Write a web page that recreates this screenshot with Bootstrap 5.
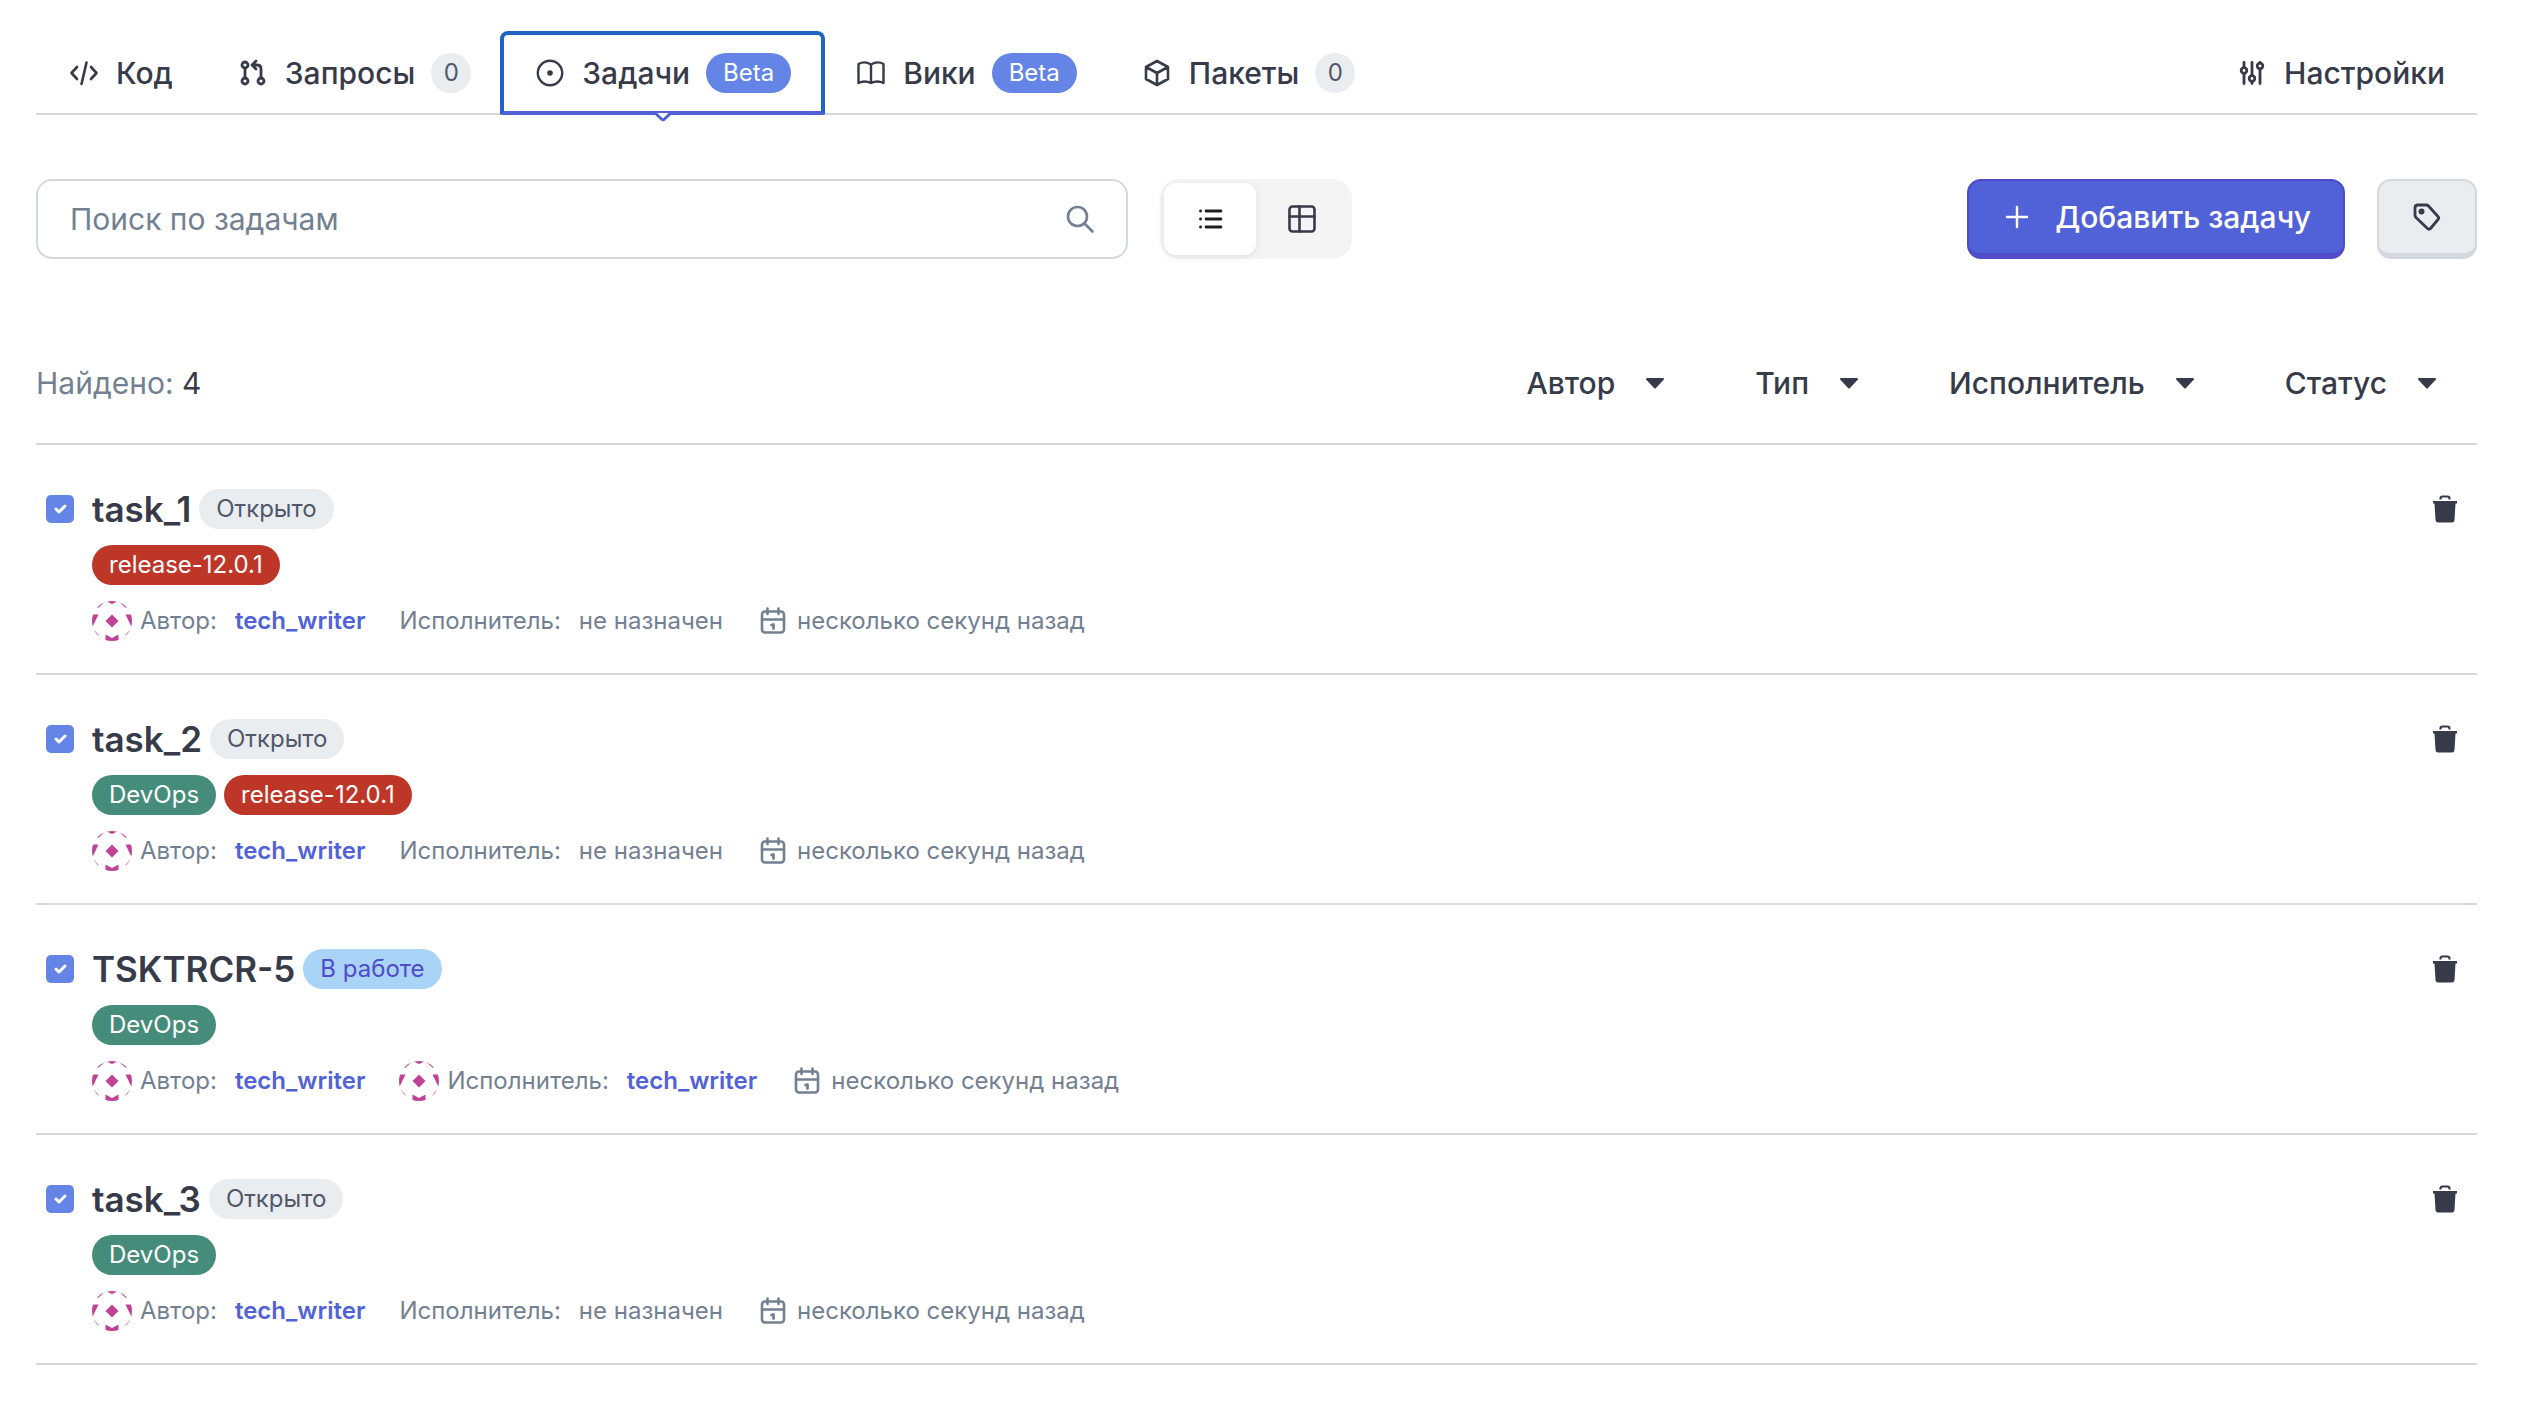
<!DOCTYPE html>
<html lang="ru">
<head>
<meta charset="utf-8">
<meta name="viewport" content="width=device-width, initial-scale=1">
<title>Задачи</title>
<link href="https://cdn.jsdelivr.net/npm/bootstrap@5.3.0/dist/css/bootstrap.min.css" rel="stylesheet">
<style>
:root{--ink:#373b49;--muted:#738092;--line:#d3d9df;--soft:#e9edf0;--sky:#6485e5;--brand:#5162d9;--brand-dark:#4f4bc9}
body{font-family:Inter,"Noto Sans",sans-serif;font-size:30px;line-height:40px;color:var(--ink);background:#fff}
.page{padding:31px 55px 0 36px}
svg{display:block;flex:none;fill:none;stroke:currentColor;stroke-linecap:round;stroke-linejoin:round}
.i32{width:32px;height:32px}
.tabs{border-bottom:2px solid var(--line)}
.tab-item{height:84px;margin-bottom:-2px;padding:0 32px;gap:16px;font-weight:500;color:var(--ink);text-decoration:none;display:flex;align-items:center;position:relative}
.tab-item.active{border:4px solid #2162c7;border-bottom-color:var(--brand);border-radius:8px 8px 2px 2px;padding:0 30px;margin-right:-2px;margin-left:-3px;background:#fff}
.tab-tip{position:absolute;left:50%;top:100%;margin-left:-10px;width:20px;height:12px}
.pill{height:40px;padding:0 17px;border-radius:20px;font-size:24px;line-height:40px;font-weight:400;white-space:nowrap}
.pill-round{min-width:40px;padding:0;text-align:center}
.pill-sky{background:var(--sky);color:#fff}
.pill-soft{background:var(--soft);color:#515869}
.pill-work{background:#a9d3f7;color:var(--brand-dark)}
.pill-red{background:#be3628;color:#fff}
.pill-green{background:#468c7b;color:#fff}
.tools{margin-top:64px;gap:32px}
.search{flex:0 1 1092px;height:80px;border:2px solid var(--line);border-radius:16px;padding:0 30px 0 32px}
.search input{border:0;padding:0;font-size:30px;line-height:40px;color:var(--ink);background:none;min-width:0}
.search input:focus{box-shadow:none}
.search input::placeholder{color:var(--muted);opacity:1}
.search button{color:var(--muted)}
.plain{border:0;background:none;padding:0;color:inherit}
.switch{height:80px;padding:4px;border-radius:20px;background:#f4f4f4}
.switch button{width:92px;border:0;border-radius:12px;background:none;color:var(--ink)}
.switch .on{background:#fff;color:#1e1e22;box-shadow:0 2px 8px rgba(0,0,0,.08)}
.act{height:80px;border-radius:14px;border:2px solid;border-bottom-width:6px;padding:0 32px;gap:22px;font-size:30px;line-height:40px}
.act-main,.act-main:hover{background:var(--brand);border-color:var(--brand-dark);color:#fff}
.act-soft,.act-soft:hover{background:var(--soft);border-color:var(--line);color:var(--ink)}
.found{margin-top:104px;padding-bottom:40px;border-bottom:2px solid var(--line)}
.found-label{color:var(--muted)}
.filter{gap:24px;padding:8px 34px 8px 16px;font-weight:500}
.filters{gap:34px;margin:-8px 0}
.task{padding:44px 16px 32px 10px;border-bottom:2px solid var(--line);gap:18px}
.task .form-check-input{width:28px;height:28px;margin:6px 0 0;border:0;border-radius:5px}
.task .form-check-input:checked{background-color:var(--sky);background-size:20px}
.title{font-size:35px;line-height:40px;font-weight:600;margin:0}
.title a{color:inherit;text-decoration:none}
.meta{font-size:24px;color:var(--muted);gap:34px}
.meta a{color:var(--brand);font-weight:600;text-decoration:none}
.person{gap:8px}
.value{margin-left:10px}
.ava{width:40px;height:40px;color:#bf4296}
</style>
</head>
<body>
<svg width="0" height="0" class="position-absolute" aria-hidden="true">
<defs>
<clipPath id="round"><circle cx="20" cy="20" r="20"/></clipPath>
<symbol id="avatar" viewBox="0 0 40 40"><g clip-path="url(#round)" fill="currentColor" stroke="none"><path d="M20 13.500L26.500 20 20 26.500 13.500 20ZM13.500 0H26.500L20 3ZM13.500 33.500L20 37L26.500 33.500V40H13.500ZM0 13.500H6.500L0 27ZM40 13.500H33.500L40 27Z"/><path d="M6 7L13.500 0.500L12 0L5 6ZM34 7L26.500 0.500L28 0L35 6ZM6.500 34L0 26.500V29L6 35ZM33.500 34L40 26.500V29L34 35Z"/></g></symbol>
<symbol id="calendar" viewBox="0 0 32 32"><rect x="5" y="6.500" width="22" height="21" rx="3" stroke-width="2.600"/><path d="M5 14.500H27M10.500 3.500V9M21.500 3.500V9" stroke-width="2.600"/><path d="M14.500 20L16.500 19.500V23.500" stroke-width="2.800"/></symbol>
<symbol id="trash" viewBox="0 0 32 32"><path d="M4 8H28V10.500H26.500L25.500 27Q25.300 29.500 23 29.500H9Q6.700 29.500 6.500 27L5.500 10.500H4Z" fill="currentColor" stroke="none"/><path d="M11.500 6.500V5.500Q11.500 3.500 13.500 3.500H18.500Q20.500 3.500 20.500 5.500V6.500" stroke-width="2.200" stroke-linecap="butt"/></symbol>
<symbol id="caret" viewBox="0 0 32 32"><path d="M8 12H24L16 20.500Z" fill="currentColor" stroke-width="2"/></symbol>
</defs>
</svg>
<main class="page">
<nav class="tabs d-flex" aria-label="Разделы проекта">
<a class="tab-item" href="#code"><svg class="i32" viewBox="0 0 32 32" stroke-width="2.600"><path d="M9 10L3.500 16L9 22M23 10L28.500 16L23 22M18.500 5.500L13.500 27"/></svg>Код</a>
<a class="tab-item" href="#requests"><svg class="i32" viewBox="0 0 32 32" stroke-width="2.800"><circle cx="8" cy="8" r="3"/><circle cx="8" cy="24" r="3"/><circle cx="24" cy="24" r="3"/><path d="M8 11V21M24 21V12Q24 8 20 8H15M19 4L15 8L19 12"/></svg>Запросы<span class="pill pill-soft pill-round">0</span></a>
<a class="tab-item active" href="#tasks" aria-current="page"><svg class="i32" viewBox="0 0 32 32" stroke-width="2.400"><circle cx="16" cy="16" r="12.200"/><circle cx="16" cy="16" r="2.800" fill="currentColor" stroke="none"/></svg>Задачи<span class="pill pill-sky">Beta</span><svg class="tab-tip" viewBox="0 0 20 12"><path d="M4 2L10 8L16 2Z" fill="#fff" stroke="none"/><path d="M2 2L8.500 8Q10 9.500 11.500 8L18 2" stroke="#5162d9" stroke-width="3"/></svg></a>
<a class="tab-item" href="#wiki"><svg class="i32" viewBox="0 0 32 32" stroke-width="2.400"><path d="M16 7.500Q9.500 3.500 3.500 7V26Q9.500 23 16 26Q22.500 23 28.500 26V7Q22.500 3.500 16 7.500V26"/></svg>Вики<span class="pill pill-sky">Beta</span></a>
<a class="tab-item" href="#packages"><svg class="i32" viewBox="0 0 32 32" stroke-width="2.600"><path d="M16 4L27 10V22L16 28L5 22V10ZM5 10L16 16L27 10M16 16V28"/></svg>Пакеты<span class="pill pill-soft pill-round">0</span></a>
<a class="tab-item ms-auto" href="#settings"><svg class="i32" viewBox="0 0 32 32" stroke-width="2.800"><circle cx="8" cy="13.500" r="2.800"/><circle cx="16" cy="21.500" r="2.800"/><circle cx="24" cy="9" r="2.800"/><path d="M8 5.500V10.500M8 16.500V26.500M16 5.500V18.500M16 24.500V26.500M24 5.500V6M24 12V26.500"/></svg>Настройки</a>
</nav>
<div class="tools d-flex align-items-center">
<form class="search d-flex align-items-center" role="search">
<input class="form-control" type="text" placeholder="Поиск по задачам" aria-label="Поиск по задачам">
<button class="plain" type="button" aria-label="Найти"><svg class="i32" viewBox="0 0 32 32" stroke-width="2.600"><circle cx="13.500" cy="13.500" r="9.500"/><path d="M20.500 20.500L28.500 28.500"/></svg></button>
</form>
<div class="switch d-flex" role="group" aria-label="Вид">
<button class="on d-flex align-items-center justify-content-center" type="button" aria-label="Список"><svg class="i32" viewBox="0 0 32 32" stroke-width="2.800"><path d="M12 8H27M12 16H27M12 24H27M6.500 8H6.600M6.500 16H6.600M6.500 24H6.600"/></svg></button>
<button class="d-flex align-items-center justify-content-center" type="button" aria-label="Доска"><svg class="i32" viewBox="0 0 32 32" stroke-width="2.600"><rect x="3.500" y="3.500" width="25" height="25" rx="3"/><path d="M3.500 13.500H28.500M13.500 3.500V28.500"/></svg></button>
</div>
<button class="act act-main btn d-flex align-items-center ms-auto fw-medium" type="button"><svg class="i32" viewBox="0 0 32 32" stroke-width="2.400"><path d="M16 6V26M6 16H26"/></svg>Добавить задачу</button>
<button class="act act-soft btn d-flex align-items-center" type="button" aria-label="Метки"><svg class="i32" viewBox="0 0 32 32" stroke-width="2.800"><path d="M7 4H15Q16.500 4 17.500 5L27 15.500Q28.500 17 27 18.500L19.500 27.500Q18 29 16.500 27.500L5 16.500Q4 15.500 4 14V7Q4 4 7 4Z"/><circle cx="10.500" cy="10.500" r="1.600" fill="currentColor"/></svg></button>
</div>
<div class="found d-flex justify-content-between align-items-center">
<div><span class="found-label">Найдено:</span> 4</div>
<div class="filters d-flex">
<button class="filter plain d-flex align-items-center" type="button">Автор<svg class="i32"><use href="#caret"/></svg></button>
<button class="filter plain d-flex align-items-center" type="button">Тип<svg class="i32"><use href="#caret"/></svg></button>
<button class="filter plain d-flex align-items-center" type="button">Исполнитель<svg class="i32"><use href="#caret"/></svg></button>
<button class="filter plain d-flex align-items-center" type="button">Статус<svg class="i32"><use href="#caret"/></svg></button>
</div>
</div>
<article class="task d-flex align-items-start">
<input class="form-check-input" type="checkbox" checked aria-label="task_1">
<div class="d-flex flex-column gap-3 flex-grow-1">
<div class="d-flex gap-2"><h2 class="title"><a href="#task_1">task_1</a></h2><span class="pill pill-soft">Открыто</span></div>
<div class="d-flex gap-2"><span class="pill pill-red">release-12.0.1</span></div>
<div class="meta d-flex"><span class="person d-flex"><svg class="ava"><use href="#avatar"/></svg>Автор:<a class="value" href="#tech_writer">tech_writer</a></span><span class="person d-flex">Исполнитель:<span class="value">не назначен</span></span><span class="d-flex gap-2 align-items-center"><svg class="i32"><use href="#calendar"/></svg>несколько секунд назад</span></div>
</div>
<button class="plain mt-1" type="button" aria-label="Удалить"><svg class="i32"><use href="#trash"/></svg></button>
</article>
<article class="task d-flex align-items-start">
<input class="form-check-input" type="checkbox" checked aria-label="task_2">
<div class="d-flex flex-column gap-3 flex-grow-1">
<div class="d-flex gap-2"><h2 class="title"><a href="#task_2">task_2</a></h2><span class="pill pill-soft">Открыто</span></div>
<div class="d-flex gap-2"><span class="pill pill-green">DevOps</span><span class="pill pill-red">release-12.0.1</span></div>
<div class="meta d-flex"><span class="person d-flex"><svg class="ava"><use href="#avatar"/></svg>Автор:<a class="value" href="#tech_writer">tech_writer</a></span><span class="person d-flex">Исполнитель:<span class="value">не назначен</span></span><span class="d-flex gap-2 align-items-center"><svg class="i32"><use href="#calendar"/></svg>несколько секунд назад</span></div>
</div>
<button class="plain mt-1" type="button" aria-label="Удалить"><svg class="i32"><use href="#trash"/></svg></button>
</article>
<article class="task d-flex align-items-start">
<input class="form-check-input" type="checkbox" checked aria-label="TSKTRCR-5">
<div class="d-flex flex-column gap-3 flex-grow-1">
<div class="d-flex gap-2"><h2 class="title"><a href="#TSKTRCR-5">TSKTRCR-5</a></h2><span class="pill pill-work">В работе</span></div>
<div class="d-flex gap-2"><span class="pill pill-green">DevOps</span></div>
<div class="meta d-flex"><span class="person d-flex"><svg class="ava"><use href="#avatar"/></svg>Автор:<a class="value" href="#tech_writer">tech_writer</a></span><span class="person d-flex"><svg class="ava"><use href="#avatar"/></svg>Исполнитель:<a class="value" href="#tech_writer">tech_writer</a></span><span class="d-flex gap-2 align-items-center"><svg class="i32"><use href="#calendar"/></svg>несколько секунд назад</span></div>
</div>
<button class="plain mt-1" type="button" aria-label="Удалить"><svg class="i32"><use href="#trash"/></svg></button>
</article>
<article class="task d-flex align-items-start">
<input class="form-check-input" type="checkbox" checked aria-label="task_3">
<div class="d-flex flex-column gap-3 flex-grow-1">
<div class="d-flex gap-2"><h2 class="title"><a href="#task_3">task_3</a></h2><span class="pill pill-soft">Открыто</span></div>
<div class="d-flex gap-2"><span class="pill pill-green">DevOps</span></div>
<div class="meta d-flex"><span class="person d-flex"><svg class="ava"><use href="#avatar"/></svg>Автор:<a class="value" href="#tech_writer">tech_writer</a></span><span class="person d-flex">Исполнитель:<span class="value">не назначен</span></span><span class="d-flex gap-2 align-items-center"><svg class="i32"><use href="#calendar"/></svg>несколько секунд назад</span></div>
</div>
<button class="plain mt-1" type="button" aria-label="Удалить"><svg class="i32"><use href="#trash"/></svg></button>
</article>
</main>
<script src="https://cdn.jsdelivr.net/npm/bootstrap@5.3.0/dist/js/bootstrap.bundle.min.js"></script>
</body>
</html>
